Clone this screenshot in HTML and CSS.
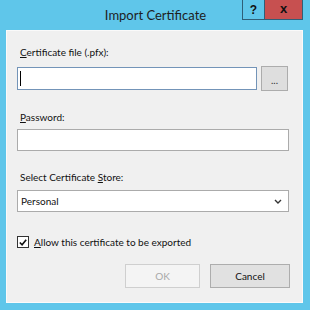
FILE: index.html
```html
<!DOCTYPE html>
<html lang="en">
  <head>
    <meta charset="UTF-8" />
    <title>Import Certificate</title>
    <link rel="stylesheet" href="styles.css">
  </head>
  <body>
    <div class="window">
      <div class="titlebar">
        <span class="title">Import Certificate</span>
        <div class="caption-buttons">
          <span class="help-btn">?</span>
          <span class="close-btn">x</span>
        </div>
      </div>

      <div class="content">
        <label class="field-label"><u>C</u>ertificate file (.pfx):</label>
        <div class="file-row">
          <div class="textbox focused"><span class="caret"></span></div>
          <div class="browse-btn">...</div>
        </div>

        <label class="field-label gap"><u>P</u>assword:</label>
        <div class="textbox pw"></div>

        <label class="field-label gap">Select Certificate <u>S</u>tore:</label>
        <div class="select">
          <span>Personal</span>
          <svg width="8" height="5" viewBox="0 0 8 5"><path d="M1 1 L4 4 L7 1" fill="none" stroke="#333" stroke-width="1.4"/></svg>
        </div>

        <div class="check-row">
          <span class="checkbox">
            <svg width="11" height="11" viewBox="0 0 11 11"><path d="M2 5.5 L4.5 8 L9 2.5" fill="none" stroke="#111" stroke-width="1.8"/></svg>
          </span>
          <span><u>A</u>llow this certificate to be exported</span>
        </div>

        <div class="buttons">
          <div class="btn disabled">OK</div>
          <div class="btn">Cancel</div>
        </div>
      </div>
    </div>
  </body>
</html>
```

FILE: styles.css
```css
body {
  margin: 0;
  font-family: Lato, "Liberation Sans", sans-serif;
}
.window {
  width: 310px;
  height: 310px;
  background: #5fc6ea;
  box-sizing: border-box;
  padding: 0 7px 7px 6px;
  display: flex;
  flex-direction: column;
}
.titlebar {
  height: 30px;
  position: relative;
  display: flex;
  justify-content: center;
  align-items: center;
}
.title {
  font-size: 13px;
  color: #1e1e1e;
  margin-left: 2px;
}
.caption-buttons {
  position: absolute;
  top: 0;
  right: 0;
  display: flex;
}
.help-btn {
  width: 23px;
  height: 20px;
  box-sizing: border-box;
  border: 1px solid #2f5f78;
  border-top: none;
  font-family: "Liberation Sans", sans-serif;
  font-weight: bold;
  font-size: 12px;
  color: #111;
  display: flex;
  align-items: center;
  justify-content: center;
}
.close-btn {
  width: 38px;
  height: 20px;
  background: #c75050;
  box-sizing: border-box;
  border: 1px solid #2f5f78;
  border-left: none;
  border-top: none;
  font-family: "Liberation Sans", sans-serif;
  font-weight: bold;
  font-size: 13px;
  color: #111;
  display: flex;
  align-items: center;
  justify-content: center;
  padding-bottom: 2px;
}
.content {
  flex: 1;
  background: #f0f0f0;
  border: 1px solid #fafafa;
  padding: 13px 13px 0 10px;
  display: flex;
  flex-direction: column;
  font-size: 10px;
  color: #111;
}
.field-label {
  display: block;
  height: 16px;
  line-height: 16px;
  padding-left: 3px;
}
.field-label.gap {
  margin-top: 18px;
}
.file-row {
  display: flex;
  align-items: center;
  margin-top: 6px;
}
.textbox {
  height: 22px;
  box-sizing: border-box;
  background: #fff;
  border: 1px solid #ababab;
}
.textbox.focused {
  flex: 1;
  height: 23px;
  border-color: #7394b8;
  display: flex;
  align-items: center;
  padding-left: 2px;
}
.caret {
  width: 1px;
  height: 15px;
  background: #000;
}
.browse-btn {
  width: 27px;
  height: 25px;
  box-sizing: border-box;
  margin-left: 4px;
  margin-right: 1px;
  background: #dedede;
  border: 1px solid #acacac;
  display: flex;
  align-items: center;
  justify-content: center;
  font-size: 10px;
  line-height: 1;
  padding-top: 2px;
  color: #333;
}
.textbox.pw {
  margin-top: 4px;
}
.select {
  margin-top: 5px;
  height: 22px;
  box-sizing: border-box;
  background: #fff;
  border: 1px solid #ababab;
  display: flex;
  align-items: center;
  justify-content: space-between;
  padding: 0 6px 0 3px;
}
.check-row {
  margin-top: 22px;
  height: 16px;
  display: flex;
  align-items: center;
  gap: 5px;
}
.checkbox {
  width: 12px;
  height: 12px;
  box-sizing: border-box;
  border: 1px solid #333;
  background: #fff;
  display: flex;
  align-items: center;
  justify-content: center;
}
.buttons {
  margin-top: 14px;
  margin-right: -1px;
  display: flex;
  justify-content: flex-end;
  gap: 10px;
}
.btn {
  width: 80px;
  height: 24px;
  box-sizing: border-box;
  background: #e1e1e1;
  border: 1px solid #adadad;
  display: flex;
  align-items: center;
  justify-content: center;
}
.btn.disabled {
  width: 75px;
  background: #f4f4f4;
  border-color: #cfcfcf;
  color: #a8a8a8;
}
```
